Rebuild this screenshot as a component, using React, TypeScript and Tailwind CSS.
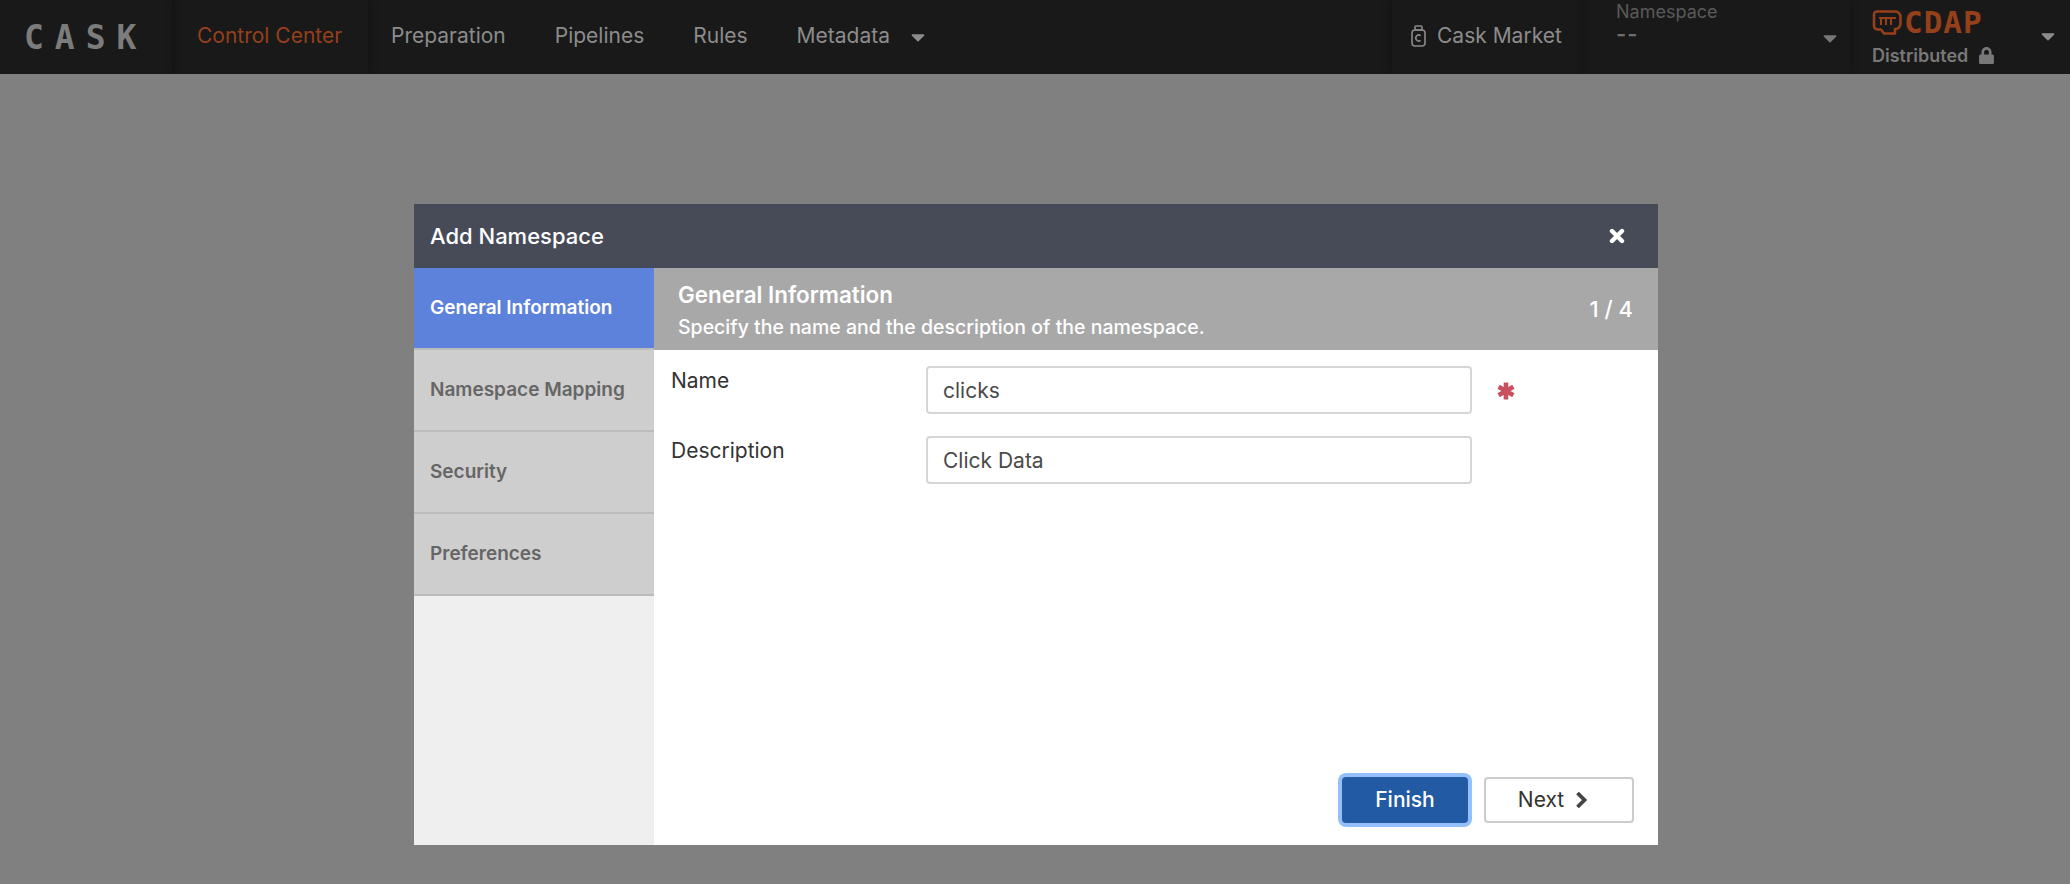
import { FaCaretDown, FaLock } from "react-icons/fa";

const navLinks = ["Preparation", "Pipelines", "Rules", "Metadata"];

const steps = ["Namespace Mapping", "Security", "Preferences"];

function JarIcon() {
  return (
    <svg width="15" height="22" viewBox="0 0 15 22" fill="none" stroke="#8a8a8a" strokeWidth="1.6">
      <rect x="4" y="1" width="7" height="4" rx="1" />
      <rect x="1" y="5" width="13" height="16" rx="3" />
      <path d="M9.6 10.6a3 3 0 1 0 0 4.8" />
    </svg>
  );
}

function FistIcon() {
  return (
    <svg width="30" height="25" viewBox="0 0 30 25" fill="none" stroke="#96401b" strokeWidth="2.6" strokeLinejoin="round">
      <path d="M2 4.5 C2 2.5 3.5 1.5 5 1.5 H23 C26.5 1.5 28.5 4 28.5 7.5 V13 C28.5 17 26 19 23 19 V23.5 H12 L9 19.5 H6 C3.5 19.5 2 18 2 16 Z" />
      <path d="M9 8 V15 M14 7 V15 M19 7 V15 M7 8 H24" strokeWidth="2" />
    </svg>
  );
}

function CloseIcon() {
  return (
    <svg width="16" height="16" viewBox="0 0 16 16" stroke="white" strokeWidth="4.4" strokeLinecap="round">
      <path d="M3 3 L13 13 M13 3 L3 13" />
    </svg>
  );
}

function RequiredStar() {
  return (
    <svg width="18" height="18" viewBox="0 0 18 18" stroke="#c9515f" strokeWidth="4.6">
      <path d="M9 0.5 V17.5 M1.6 4.7 L16.4 13.3 M16.4 4.7 L1.6 13.3" />
    </svg>
  );
}

function ChevronIcon() {
  return (
    <svg width="13" height="18" viewBox="0 0 13 18" fill="none" stroke="#444444" strokeWidth="3.8">
      <path d="M2.5 2 L9.5 9 L2.5 16" />
    </svg>
  );
}

export default function App() {
  return (
    <div className="flex h-[884px] w-[2070px] flex-col overflow-hidden bg-[#808080] font-['Inter',sans-serif]">
      {/* Top bar */}
      <nav className="flex h-[74px] shrink-0 items-center overflow-hidden bg-[#191919] text-[21px] text-[#8c8c8c]">
        <div className="flex h-full w-[172px] shrink-0 items-center pl-[24px] font-['DejaVu_Sans_Mono',monospace] text-[33px] font-bold leading-none tracking-[11px] text-[#7c7c7c] shadow-[2px_0_6px_#121212]">
          CASK
        </div>
        <div className="flex h-full w-[196px] shrink-0 items-center pb-[3px] pl-[25px] text-[#96401b] shadow-[2px_0_6px_#141414]">
          Control Center
        </div>
        <div className="ml-[23px] flex h-full items-center gap-[49px] pb-[3px]">
          {navLinks.map((link) => (
            <span key={link}>{link}</span>
          ))}
        </div>
        <FaCaretDown className="mb-[1px] ml-[17px] text-[#8c8c8c]" size={22} />

        <div className="ml-auto flex h-full items-center">
          <div className="flex h-full w-[192px] items-center gap-[11px] pb-[3px] pl-[19px] shadow-[-2px_0_6px_#141414]">
            <JarIcon />
            <span>Cask Market</span>
          </div>
          <div className="flex h-full w-[266px] items-center justify-between pl-[32px] pr-[9px] shadow-[0_0_6px_#141414]">
            <div className="flex h-full flex-col pt-[1px]">
              <span className="text-[18px] leading-[22px] text-[#5a5a5a]">Namespace</span>
              <span className="text-[22px] font-semibold leading-[22px] tracking-[1px] text-[#6c6c6c]">--</span>
            </div>
            <FaCaretDown className="mt-[2px] text-[#777777]" size={22} />
          </div>
          <div className="flex h-full w-[220px] items-center justify-between pl-[22px] pr-[11px]">
            <div className="flex flex-col">
              <div className="flex h-[30px] items-center gap-[2px]">
                <FistIcon />
                <span className="font-['DejaVu_Sans_Mono',monospace] text-[31px] font-bold leading-none tracking-[1px] text-[#96401b]">
                  CDAP
                </span>
              </div>
              <div className="mt-[7px] flex items-center gap-[10px] text-[18px] font-semibold leading-[22px] text-[#787878]">
                <span>Distributed</span>
                <FaLock size={17} />
              </div>
            </div>
            <FaCaretDown className="mb-[3px] text-[#8c8c8c]" size={22} />
          </div>
        </div>
      </nav>

      {/* Modal */}
      <main className="flex-1 pl-[414px] pt-[130px]">
        <div className="flex h-[641px] w-[1244px] flex-col">
          <header className="flex h-[64px] shrink-0 items-center justify-between bg-[#474b58] pl-[16px] pr-[33px] text-white">
            <h1 className="text-[22px] font-medium">Add Namespace</h1>
            <CloseIcon />
          </header>

          <div className="flex flex-1">
            <aside className="flex w-[240px] shrink-0 flex-col bg-[#efefef] text-[19px] font-semibold text-[#666666]">
              <div className="flex h-[82px] items-center border-b-[2px] border-[#bcbcbc] bg-[#5d82dc] pl-[16px] text-white">
                General Information
              </div>
              {steps.map((step) => (
                <div key={step} className="flex h-[82px] items-center border-b-[2px] border-[#bcbcbc] bg-[#cecece] pl-[16px]">
                  {step}
                </div>
              ))}
            </aside>

            <section className="flex flex-1 flex-col bg-white">
              <div className="flex h-[82px] shrink-0 items-center justify-between bg-[#a8a8a8] pl-[24px] pr-[25px] text-white">
                <div className="flex flex-col pt-[4px]">
                  <h2 className="text-[22.4px] font-semibold leading-[30px]">General Information</h2>
                  <p className="mt-[2px] text-[19.5px] font-medium leading-[30px]">
                    Specify the name and the description of the namespace.
                  </p>
                </div>
                <span className="text-[22px] font-medium">1 / 4</span>
              </div>

              <div className="flex flex-1 flex-col pl-[17px] pr-[24px] pt-[16px] text-[21px] text-[#333333]">
                <div className="flex items-start">
                  <label className="w-[255px] pt-[2px] leading-[26px]">Name</label>
                  <input
                    defaultValue="clicks"
                    className="h-[48px] w-[546px] rounded-[4px] border-[2px] border-[#d6d6d6] px-[15px] text-[#4a4a4a] outline-none"
                  />
                  <span className="ml-[25px] mt-[16px]">
                    <RequiredStar />
                  </span>
                </div>
                <div className="mt-[22px] flex items-start">
                  <label className="w-[255px] pt-[2px] leading-[26px]">Description</label>
                  <input
                    defaultValue="Click Data"
                    className="h-[48px] w-[546px] rounded-[4px] border-[2px] border-[#d6d6d6] px-[15px] text-[#4a4a4a] outline-none"
                  />
                </div>

                <div className="mb-[22px] mt-auto flex justify-end gap-[16px]">
                  <button className="h-[46px] w-[126px] rounded-[4px] bg-[#225ba3] font-medium text-white shadow-[0_0_0_4px_#93c0fb]">
                    Finish
                  </button>
                  <button className="flex h-[46px] w-[150px] items-center justify-center gap-[11px] rounded-[4px] border-[2px] border-[#cccccc] bg-white pr-[12px] text-[#333333]">
                    Next
                    <ChevronIcon />
                  </button>
                </div>
              </div>
            </section>
          </div>
        </div>
      </main>
    </div>
  );
}
